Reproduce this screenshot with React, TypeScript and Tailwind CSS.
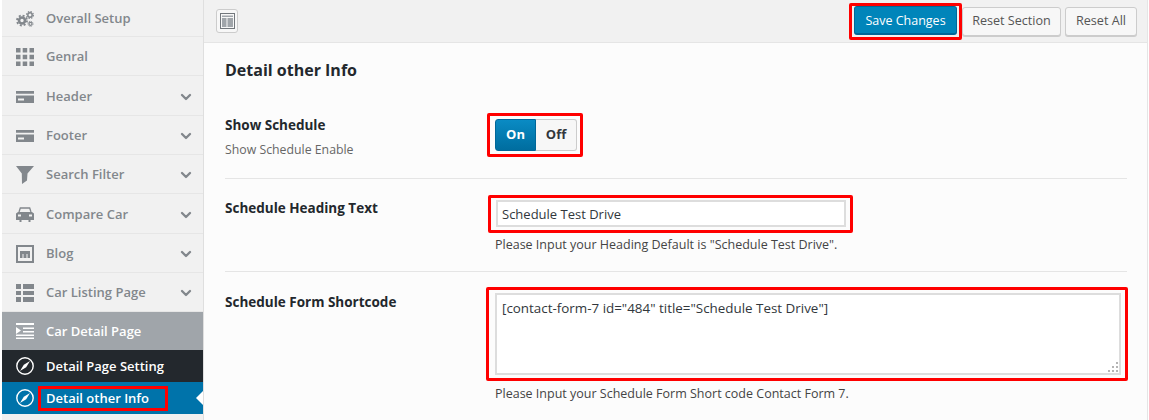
import { ChevronDown } from 'lucide-react';
import type { ReactNode } from 'react';

const font = { fontFamily: '"Open Sans", sans-serif' };

function GearsIcon() {
  return (
    <svg width="18" height="16" viewBox="0 0 18 16" fill="none" stroke="#82878c">
      <circle cx="6" cy="9.500" r="3" strokeWidth="2.600" />
      <circle cx="6" cy="9.500" r="5" strokeWidth="1.800" strokeDasharray="2 1.930" />
      <circle cx="14" cy="4" r="2.200" strokeWidth="1.500" />
      <circle cx="14" cy="4" r="3.400" strokeWidth="1.200" strokeDasharray="1.500 1.170" />
      <circle cx="14.500" cy="12.800" r="1.500" strokeWidth="1.200" />
      <circle cx="14.500" cy="12.800" r="2.500" strokeWidth="1" strokeDasharray="1.100 .86" />
    </svg>
  );
}

function GridIcon() {
  return (
    <svg width="18" height="18" viewBox="0 0 18 18" fill="#82878c">
      <path d="M0 0h4.500v4.500H0zM6.700 0h4.500v4.500H6.700zM13.500 0H18v4.500h-4.500zM0 6.700h4.500v4.500H0zM6.700 6.700h4.500v4.500H6.700zM13.500 6.700H18v4.500h-4.500zM0 13.500h4.500V18H0zM6.700 13.500h4.500V18H6.700zM13.500 13.500H18V18h-4.500z" />
    </svg>
  );
}

function CardIcon() {
  return (
    <svg width="18" height="12" viewBox="0 0 18 12" fill="#82878c">
      <path d="M0 0h18v2.800H0zM0 4.500h18V12H0zM2 7.500v2h6v-2z" fillRule="evenodd" />
    </svg>
  );
}

function FilterIcon() {
  return (
    <svg width="18" height="18" viewBox="0 0 18 18" fill="#82878c">
      <path d="M0 0h18l-6.500 7.500-.5 7-5 3.500-.2-10.500z" />
    </svg>
  );
}

function CarIcon() {
  return (
    <svg width="18" height="15" viewBox="0 0 18 15" fill="#82878c">
      <path d="M3 5 4.300 1h9.400L15 5" fill="none" stroke="#82878c" strokeWidth="1.300" />
      <path d="M2 5h14l2 1.500V13h-3.500v2h-2v-2h-7v2h-2v-2H0V6.500zM2 7.500v2h3v-2zM13 7.500v2h3v-2z" fillRule="evenodd" />
    </svg>
  );
}

function BlogIcon() {
  return (
    <svg width="18" height="18" viewBox="0 0 18 18" fill="#82878c">
      <path d="M0 0h18v18H0zM2 2v14h14V2zM4 6h10v7h-2.500V9h-1v4h-3V9h-1v4H4z" fillRule="evenodd" />
    </svg>
  );
}

function ListIcon() {
  return (
    <svg width="18" height="18" viewBox="0 0 18 18" fill="#82878c">
      <path d="M0 0h5v5H0zM7 0h11v5H7zM0 7h5v4H0zM7 7h11v4H7zM0 13h5v5H0zM7 13h11v5H7z" />
    </svg>
  );
}

function DetailIcon() {
  return (
    <svg width="18" height="16" viewBox="0 0 18 16" fill="#fff">
      <path d="M0 0h18v2H0zM7 4.500h11v1.500H7zM7 8h11v1.500H7zM0 11.500h18V13H0zM0 14.500h18V16H0zM0 4l5 3.500L0 11z" />
    </svg>
  );
}

function CompassIcon() {
  return (
    <svg width="18" height="18" viewBox="0 0 18 18" fill="none">
      <circle cx="9" cy="9" r="8.200" stroke="#fff" strokeWidth="1.400" />
      <path d="M14 4 10.200 10.200 4 14 7.800 7.800z" fill="#fff" />
    </svg>
  );
}

type MenuItem = { label: string; icon: ReactNode; chevron?: boolean; h: string };

const menu: MenuItem[] = [
  { label: 'Overall Setup', icon: <GearsIcon />, h: 'h-[37px] pt-[1px]' },
  { label: 'Genral', icon: <GridIcon />, h: 'h-[39px] pt-[2px]' },
  { label: 'Header', icon: <CardIcon />, chevron: true, h: 'h-[40px] pt-[2px]' },
  { label: 'Footer', icon: <CardIcon />, chevron: true, h: 'h-[39px] pt-[1px]' },
  { label: 'Search Filter', icon: <FilterIcon />, chevron: true, h: 'h-[39px] pt-[1px]' },
  { label: 'Compare Car', icon: <CarIcon />, chevron: true, h: 'h-[40px] pt-[2px]' },
  { label: 'Blog', icon: <BlogIcon />, chevron: true, h: 'h-[39px] pt-[1px]' },
  { label: 'Car Listing Page', icon: <ListIcon />, chevron: true, h: 'h-[39px] pt-[1px]' },
];

function Sidebar() {
  return (
    <aside className="w-[204px] shrink-0 h-full pl-[2px] bg-white">
      <div className="h-full bg-[#f1f1f1] border-r border-[#dfdfdf] flex flex-col">
        {menu.map((item) => (
          <div
            key={item.label}
            className={`${item.h} shrink-0 flex items-center pl-[14px] pr-[9px] border-b border-[#e6e6e6] text-[#82878c]`}
          >
            <span className="w-[18px] flex justify-center">{item.icon}</span>
            <span className="ml-[12px] text-[13px] font-semibold flex-1">{item.label}</span>
            {item.chevron && <ChevronDown size={16} strokeWidth={3.500} className="text-[#82878c]" />}
          </div>
        ))}
        <div className="h-[38px] shrink-0 flex items-center pl-[14px] bg-[#a0a5aa] text-white">
          <DetailIcon />
          <span className="ml-[12px] pt-[2px] text-[13px] font-semibold">Car Detail Page</span>
        </div>
        <div className="h-[32px] shrink-0 flex items-center pl-[14px] bg-[#23282d] text-white">
          <CompassIcon />
          <span className="ml-[12px] pt-[2px] text-[13px] font-semibold">Detail Page Setting</span>
        </div>
        <div className="h-[32px] shrink-0 flex items-center pl-[14px] bg-[#0073aa] text-white relative">
          <CompassIcon />
          <span className="ml-[4px] w-[130px] h-[25px] border-3 border-[#f00] pl-[5px] pt-[2px] text-[13px] font-semibold flex items-center">Detail other Info</span>
          <span className="absolute right-0 top-[9px] border-y-[7px] border-y-transparent border-r-[7px] border-r-white" />
        </div>
      </div>
    </aside>
  );
}

function ResetButton({ label, w }: { label: string; w: string }) {
  return (
    <button className={`${w} h-[29px] pt-[1px] rounded-[3px] border border-[#cccccc] bg-[#f7f7f7] text-[#555] text-[12.600px] shadow-[0_1px_0_#ccc]`}>
      {label}
    </button>
  );
}

function Topbar() {
  return (
    <div className="h-[43px] shrink-0 bg-[#f1f1f1] border-b border-[#e5e5e5] flex items-center pl-[12px] pr-[10px]">
      <div className="w-[22px] h-[24px] rounded-[3px] border border-[#cccccc] bg-[#f7f7f7] flex items-center justify-center">
        <svg width="15" height="16" viewBox="0 0 15 16" fill="none">
          <rect x=".5" y=".5" width="14" height="15" stroke="#72777c" />
          <path d="M2 2.500h11v1.500H2z" fill="#a0a5aa" />
          <path d="M2 5h4.500v9H2zM7.500 5H13v9H7.500z" fill="#a0a5aa" />
        </svg>
      </div>
      <div className="ml-auto flex items-center">
        <div className="w-[113px] h-[37px] mt-[1px] outline-3 -outline-offset-3 outline-[#f00] rounded-[2px] pt-[3px] px-[5px]">
          <button className="h-[29px] w-[103px] pt-[2px] rounded-[3px] bg-[#0085ba] border border-[#006799] border-b-[2px] text-white text-[12.500px]">
            Save Changes
          </button>
        </div>
        <div className="flex gap-[4px]">
          <ResetButton label="Reset Section" w="w-[99px]" />
          <ResetButton label="Reset All" w="w-[72px]" />
        </div>
      </div>
    </div>
  );
}

function Label({ title, sub }: { title: string; sub?: string }) {
  return (
    <div className="w-[270px] shrink-0">
      <div className="text-[13.500px] font-bold text-[#23282d] leading-[18px]">{title}</div>
      {sub && <div className="mt-[7px] text-[12.300px] text-[#666] leading-[18px]">{sub}</div>}
    </div>
  );
}

function Form() {
  return (
    <div className="flex-1 min-h-0 bg-[#fcfcfc] pl-[21px] pr-[20px] overflow-hidden">
      <h2 className="pt-[17px] text-[16px] font-bold text-[#23282d] leading-[20px]">Detail other Info</h2>

      <div className="mt-[18px] h-[81px] flex pt-[18px] border-b border-[#e5e5e5]">
        <Label title="Show Schedule" sub="Show Schedule Enable" />
        <div className="w-[96px] h-[44px] -mt-[3px] -ml-[8px] outline-3 -outline-offset-3 outline-[#f00] rounded-[2px] pt-[6px] pl-[8px] flex">
          <span className="w-[41px] h-[32px] bg-linear-to-b from-[#0a8bc4] to-[#006d9f] border border-[#006799] rounded-l-[3px] text-white text-[13px] font-bold flex items-center justify-center">On</span>
          <span className="w-[41px] h-[32px] bg-[#f7f7f7] border border-[#cccccc] border-l-0 rounded-r-[3px] text-[#32373c] text-[13px] font-bold flex items-center justify-center">Off</span>
        </div>
      </div>

      <div className="h-[93px] flex pt-[20px] border-b border-[#e5e5e5]">
        <Label title="Schedule Heading Text" />
        <div className="-ml-[7px] -mt-[4px]">
          <div className="w-[365px] h-[38px] outline-3 -outline-offset-3 outline-[#f00] rounded-[2px] pt-[5px] pl-[8px] pr-[7px]">
            <div className="h-[27px] border-2 border-[#dddddd] bg-white text-[#32373c] text-[13px] leading-[25px] pl-[4px]">Schedule Test Drive</div>
          </div>
          <p className="mt-[3px] pl-[7px] text-[12.500px] text-[#444] leading-[18px]">Please Input your Heading Default is "Schedule Test Drive".</p>
        </div>
      </div>

      <div className="flex pt-[21px]">
        <Label title="Schedule Form Shortcode" />
        <div className="-ml-[9px] -mt-[6px]">
          <div className="w-[642px] h-[94px] outline-3 -outline-offset-3 outline-[#f00] rounded-[2px] pt-[6px] pl-[9px] pr-[7px]">
            <div className="relative h-[82px] border-2 border-[#dddddd] bg-white text-[#32373c] text-[13.400px] leading-[18px] pl-[5px] pt-[4px]">
              [contact-form-7 id="484" title="Schedule Test Drive"]
              <svg width="10" height="10" viewBox="0 0 10 10" fill="#b4b4b4" className="absolute right-[1px] bottom-[1px]">
                <path d="M8 0h2v2H8zM4 4h2v2H4zM8 4h2v2H8zM0 8h2v2H0zM4 8h2v2H4zM8 8h2v2H8z" />
              </svg>
            </div>
          </div>
          <p className="mt-[4px] pl-[9px] text-[12.500px] text-[#444] leading-[18px]">Please Input your Schedule Form Short code Contact Form 7.</p>
        </div>
      </div>
    </div>
  );
}

export default function App() {
  return (
    <div className="w-[1149px] h-[420px] flex overflow-hidden bg-white" style={font}>
      <Sidebar />
      <main className="flex-1 min-w-0 flex flex-col border-r border-[#e5e5e5] mr-[1px]">
        <Topbar />
        <Form />
      </main>
    </div>
  );
}
